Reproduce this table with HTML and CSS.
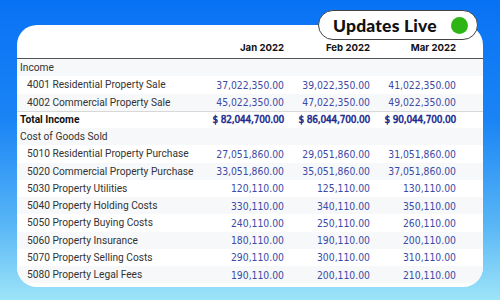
FILE: index.html
```html
<!DOCTYPE html>
<html>
<head>
<meta charset="utf-8">
<link rel="stylesheet" href="styles.css">
</head>
<body>
<div class="stage">
  <div class="card">
    <div class="row head">
      <div class="label"></div>
      <div class="num">Jan 2022</div>
      <div class="num">Feb 2022</div>
      <div class="num">Mar 2022</div>
    </div>
    <div class="row alt"><div class="label">Income</div><div></div><div></div><div></div></div>
    <div class="row"><div class="label sub">4001 Residential Property Sale</div><div class="num v">37,022,350.00</div><div class="num v">39,022,350.00</div><div class="num v">41,022,350.00</div></div>
    <div class="row alt"><div class="label sub">4002 Commercial Property Sale</div><div class="num v">45,022,350.00</div><div class="num v">47,022,350.00</div><div class="num v">49,022,350.00</div></div>
    <div class="row total"><div class="label">Total Income</div><div class="num v">$ 82,044,700.00</div><div class="num v">$ 86,044,700.00</div><div class="num v">$ 90,044,700.00</div></div>
    <div class="row alt"><div class="label">Cost of Goods Sold</div><div></div><div></div><div></div></div>
    <div class="row"><div class="label sub">5010 Residential Property Purchase</div><div class="num v">27,051,860.00</div><div class="num v">29,051,860.00</div><div class="num v">31,051,860.00</div></div>
    <div class="row alt"><div class="label sub">5020 Commercial Property Purchase</div><div class="num v">33,051,860.00</div><div class="num v">35,051,860.00</div><div class="num v">37,051,860.00</div></div>
    <div class="row"><div class="label sub">5030 Property Utilities</div><div class="num v">120,110.00</div><div class="num v">125,110.00</div><div class="num v">130,110.00</div></div>
    <div class="row alt"><div class="label sub">5040 Property Holding Costs</div><div class="num v">330,110.00</div><div class="num v">340,110.00</div><div class="num v">350,110.00</div></div>
    <div class="row"><div class="label sub">5050 Property Buying Costs</div><div class="num v">240,110.00</div><div class="num v">250,110.00</div><div class="num v">260,110.00</div></div>
    <div class="row alt"><div class="label sub">5060 Property Insurance</div><div class="num v">180,110.00</div><div class="num v">190,110.00</div><div class="num v">200,110.00</div></div>
    <div class="row"><div class="label sub">5070 Property Selling Costs</div><div class="num v">290,110.00</div><div class="num v">300,110.00</div><div class="num v">310,110.00</div></div>
    <div class="row alt"><div class="label sub">5080 Property Legal Fees</div><div class="num v">190,110.00</div><div class="num v">200,110.00</div><div class="num v">210,110.00</div></div>
  </div>
  <div class="badge"><span class="badge-text">Updates Live</span><span class="dot"></span></div>
</div>
</body>
</html>
```
FILE: styles.css
```css
html, body {
  margin: 0;
  padding: 0;
}
body {
  width: 500px;
  height: 300px;
  overflow: hidden;
  background: linear-gradient(180deg, #0872f5 0%, #1a84f5 40%, #58b6f6 75%, #9de4f8 100%);
  font-family: "Roboto", "DejaVu Sans", sans-serif;
}
.stage {
  position: relative;
  width: 500px;
  height: 300px;
  padding: 25px 17px 0 17px;
  box-sizing: border-box;
}
.card {
  background: #ffffff;
  border-radius: 20px;
  overflow: hidden;
  height: 262px;
}
.row {
  display: grid;
  grid-template-columns: minmax(0, 1fr) 86px 86px 86px;
  height: 17.25px;
  align-items: center;
  padding-right: 27px;
}
.row.alt {
  background: #f7f8fa;
}
.row.head {
  height: 34px;
  align-items: end;
  padding-bottom: 5px;
  box-sizing: border-box;
  border-bottom: 1.5px solid #555;
}
.head .num {
  font-family: "Inter", sans-serif;
  font-weight: 700;
  font-size: 9.6px;
  color: #111;
}
.label {
  font-size: 10.2px;
  color: #333;
  padding-left: 3px;
  white-space: nowrap;
}
.label.sub {
  padding-left: 10px;
}
.num {
  text-align: right;
  white-space: nowrap;
}
.num.v {
  font-family: "DejaVu Sans Condensed", "DejaVu Sans", sans-serif;
  font-size: 10.3px;
  color: #3b4aa6;
}
.row.total {
  border-top: 1px solid #d8d8d8;
  box-sizing: border-box;
}
.total .label {
  font-weight: 700;
  color: #111;
}
.total .num.v {
  font-size: 10px;
  letter-spacing: -0.2px;
  -webkit-text-stroke: 0.5px #1c2b8f;
  color: #1c2b8f;
}
.badge {
  position: absolute;
  left: 318px;
  top: 10px;
  width: 160px;
  height: 30px;
  box-sizing: border-box;
  border: 1px solid #444;
  border-radius: 15px;
  background: #fff;
  display: flex;
  align-items: center;
  padding-left: 14px;
}
.badge-text {
  font-family: "Lato", sans-serif;
  font-weight: 900;
  font-size: 17.5px;
  color: #111;
  letter-spacing: 0.2px;
}
.dot {
  width: 17px;
  height: 17px;
  border-radius: 50%;
  background: #2db516;
  margin-left: auto;
  margin-right: 9px;
}
```
